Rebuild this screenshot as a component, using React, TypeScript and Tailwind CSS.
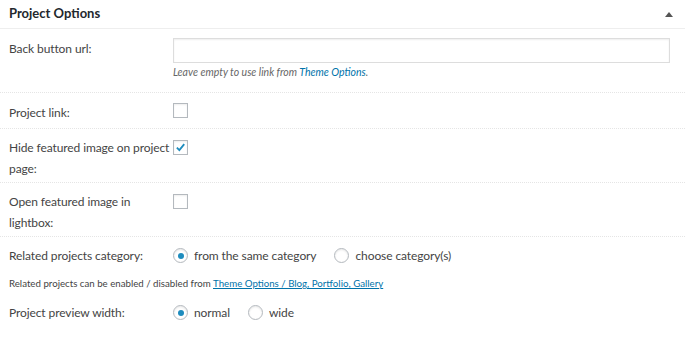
import React, { FC, ReactNode } from 'react';

const font = { fontFamily: 'Lato, "Noto Sans", sans-serif' };

const Checkbox: FC<{ checked?: boolean }> = ({ checked }) => (
  <span className="flex items-center justify-center w-[15px] h-[15px] border border-[#b4b9be] bg-white shadow-[inset_0_1px_2px_rgba(0,0,0,0.07)]">
    {checked && (
      <svg viewBox="0 0 16 16" className="w-[15px] h-[15px]">
        <path d="M3.5 8.2 L6.6 11.2 L12.6 3.8" fill="none" stroke="#1e8cbe" strokeWidth="2.2" />
      </svg>
    )}
  </span>
);

const Radio: FC<{ checked?: boolean; label: string }> = ({ checked, label }) => (
  <span className="flex items-center gap-[6px]">
    <span className="flex items-center justify-center w-[15px] h-[15px] rounded-full border border-[#b4b9be] bg-white shadow-[inset_0_1px_2px_rgba(0,0,0,0.1)]">
      {checked && <span className="w-[6px] h-[6px] rounded-full bg-[#1e8cbe]" />}
    </span>
    <span>{label}</span>
  </span>
);

interface RowProps {
  label: ReactNode;
  children: ReactNode;
  className: string;
  fieldClass?: string;
}

const Row: FC<RowProps> = ({ label, children, className, fieldClass = '' }) => (
  <div className={`flex border-b border-dotted border-[#e5e5e5] ${className}`}>
    <div className="w-[173px] shrink-0 pl-[9px] leading-[21px] whitespace-nowrap tracking-[-0.1px]">{label}</div>
    <div className={`flex-1 pr-[15px] ${fieldClass}`}>{children}</div>
  </div>
);

const App: FC = () => (
  <div className="w-[685px] h-[339px] bg-white text-[12px] text-[#444]" style={font}>
    <div className="flex items-center justify-between h-[29px] pl-[9px] pr-[12px] border-b border-[#eee]">
      <span className="font-bold text-[13px] text-[#23282d]">Project Options</span>
      <span className="w-0 h-0 border-l-[4px] border-r-[4px] border-b-[5px] border-l-transparent border-r-transparent border-b-[#555]" />
    </div>

    <Row label="Back button url:" className="pt-[9px] pb-[11px]">
      <div className="h-[25px] border border-[#ddd] shadow-[inset_0_1px_2px_rgba(0,0,0,0.07)]" />
      <div className="mt-[1px] text-[10.5px] italic text-[#666] leading-[17px]">
        Leave empty to use link from <span className="text-[#0073aa]">Theme Options</span>.
      </div>
    </Row>

    <Row label="Project link:" className="pt-[9px] pb-[5px]" fieldClass="pt-[1px]">
      <Checkbox />
    </Row>

    <Row label={<>Hide featured image on project<br />page:</>} className="pt-[8px] pb-[3px]" fieldClass="pt-[3px]">
      <Checkbox checked />
    </Row>

    <Row label={<>Open featured image in<br />lightbox:</>} className="pt-[8px] pb-[3px]" fieldClass="pt-[3px]">
      <Checkbox />
    </Row>

    <div className="flex items-center pt-[8px] leading-[21px] tracking-[-0.1px]">
      <div className="w-[173px] shrink-0 pl-[9px]">Related projects category:</div>
      <div className="flex items-center gap-[18px]">
        <Radio checked label="from the same category" />
        <Radio label="choose category(s)" />
      </div>
    </div>
    <div className="pl-[9px] pt-[9px] text-[9.7px] leading-[17px]">
      Related projects can be enabled / disabled from{' '}
      <span className="text-[#0073aa] underline">Theme Options / Blog, Portfolio, Gallery</span>
    </div>
    <div className="flex items-center pt-[10px] leading-[21px] tracking-[-0.1px]">
      <div className="w-[173px] shrink-0 pl-[9px]">Project preview width:</div>
      <div className="flex items-center gap-[18px]">
        <Radio checked label="normal" />
        <Radio label="wide" />
      </div>
    </div>
  </div>
);

export default App;
